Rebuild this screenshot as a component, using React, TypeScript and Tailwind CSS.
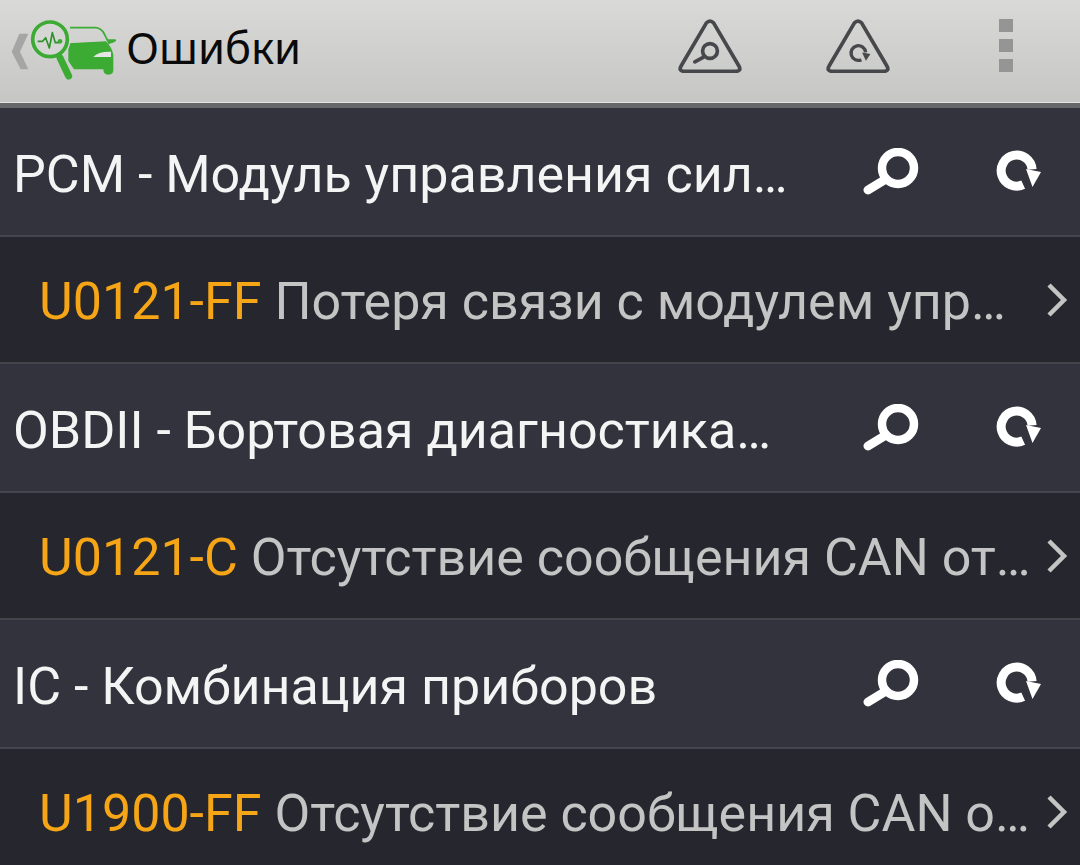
const font = { fontFamily: "Roboto, sans-serif" };

function Logo() {
  return (
    <svg width="120" height="80" viewBox="0 0 360 240" className="shrink-0">
      <path d="M58 83 H85 L60 137 L85 190 H62 L35 137 Z" fill="#a5a5a5" />
      <path d="M205 112 L318 106 Q336 125 340 146 V192 Q340 206 325 206 Q310 206 310 190 H222 L205 165 Z" fill="#3bab33" />
      <path d="M210 65 H285 Q303 65 313 84 L328 114" fill="none" stroke="#3bab33" strokeWidth="5" />
      <path d="M322 100 H344 Q351 100 347 106 Q340 112 328 113 Z" fill="#3bab33" />
      <path d="M280 153 Q294 136 333 137 V153 Z" fill="#e6e6e4" />
      <circle cx="150" cy="100" r="62" fill="#d4d5d3" />
      <circle cx="150" cy="100" r="52" fill="#d6d7d5" stroke="#3bab33" strokeWidth="11" />
      <path d="M180 155 L206 210" stroke="#3bab33" strokeWidth="21" strokeLinecap="round" />
      <path d="M113 106 H128 L137 95 L148 126 L157 80 L166 110 H178" fill="none" stroke="#2e9129" strokeWidth="5" strokeLinejoin="round" />
      <circle cx="180" cy="106" r="7" fill="#3bab33" />
    </svg>
  );
}

function TriBase() {
  return (
    <path
      d="M84 12 Q95 0 106 12 L180 138 Q190 155 172 155 H18 Q0 155 10 138 Z"
      fill="none"
      stroke="#46484c"
      strokeWidth="11"
      strokeLinejoin="round"
    />
  );
}

function TriSearch() {
  return (
    <svg width="64" height="54" viewBox="0 0 190 160" className="shrink-0">
      <TriBase />
      <circle cx="95" cy="95" r="22" fill="none" stroke="#46484c" strokeWidth="11" />
      <path d="M76 113 L50 127" stroke="#46484c" strokeWidth="11" strokeLinecap="round" />
    </svg>
  );
}

function TriRefresh() {
  return (
    <svg width="64" height="54" viewBox="0 0 190 160" className="shrink-0">
      <TriBase />
      <path d="M105 120.6 A21.75 21.75 0 1 1 117.6 99" fill="none" stroke="#46484c" strokeWidth="10" />
      <path d="M107 99 L132 104 L118.5 123.5 Z" fill="#46484c" />
    </svg>
  );
}

function Search() {
  return (
    <svg width="58" height="48" viewBox="0 0 58 48" className="shrink-0">
      <circle cx="36" cy="20" r="16" fill="none" stroke="#fff" strokeWidth="8.5" />
      <path d="M24 31 L6 42" stroke="#fff" strokeWidth="9" strokeLinecap="round" />
    </svg>
  );
}

function Refresh() {
  return (
    <svg width="46" height="44" viewBox="0 0 46 44" className="shrink-0">
      <path d="M27.2 34.7 A15.5 15.5 0 1 1 36.1 19.3" fill="none" stroke="#fff" strokeWidth="9" />
      <path d="M30 19 L45 22 L36.5 37 Z" fill="#fff" />
    </svg>
  );
}

function Chevron() {
  return (
    <svg width="22" height="36" viewBox="0 0 22 36" className="shrink-0">
      <path d="M3 3 L18 18 L3 33" fill="none" stroke="#c4c4c4" strokeWidth="4.5" />
    </svg>
  );
}

function Section({ title }: { title: string }) {
  return (
    <div className="flex h-[129px] items-center border-b-2 border-[#45464c] bg-[#32333c] pl-[13px]">
      <div className="min-w-0 flex-1 whitespace-nowrap pt-[6px] text-[52px] leading-[62px] text-[#f4f4f4]">{title}</div>
      <div className="flex items-center pr-[38px]">
        <Search />
        <div className="w-[76px]" />
        <Refresh />
      </div>
    </div>
  );
}

function Item({ code, text }: { code: string; text: string }) {
  return (
    <div className="flex h-[127px] shrink-0 items-center border-b-2 border-[#45464c] bg-[#25262e] pl-[39px] pr-[12px]">
      <div className="min-w-0 flex-1 whitespace-nowrap pt-[4px] text-[52px] leading-[62px]">
        <span className="text-[#f5a516]">{code}</span>
        <span className="text-[#c4c4c4]"> {text}</span>
      </div>
      <Chevron />
    </div>
  );
}

export default function App() {
  return (
    <div className="h-[865px] w-[1080px] overflow-hidden bg-[#25262e]" style={font}>
      <div className="flex h-[108px] items-center border-b-[5px] border-[#66676a] bg-gradient-to-b from-[#d9dad8] to-[#c6c7c5] pb-[12px] shadow-[inset_0_-1px_0_#e4e4e2]">
        <Logo />
        <div
          className="ml-[6px] flex-1 pt-[2px] text-[43.5px] leading-[60px] text-[#0a0a0a]"
          style={{ fontFamily: "'Noto Sans', sans-serif" }}
        >
          Ошибки
        </div>
        <div className="flex items-center pr-[67px]">
          <TriSearch />
          <div className="w-[84px]" />
          <TriRefresh />
          <div className="w-[109px]" />
          <div className="flex flex-col gap-[7px]">
            <div className="h-[13px] w-[14px] bg-[#959595]" />
            <div className="h-[13px] w-[14px] bg-[#959595]" />
            <div className="h-[13px] w-[14px] bg-[#959595]" />
          </div>
        </div>
      </div>
      <Section title="PCM - Модуль управления сил…" />
      <Item code="U0121-FF" text="Потеря связи с модулем упр…" />
      <Section title="OBDII - Бортовая диагностика…" />
      <Item code="U0121-C" text="Отсутствие сообщения CAN от…" />
      <Section title="IC - Комбинация приборов" />
      <Item code="U1900-FF" text="Отсутствие сообщения CAN о…" />
    </div>
  );
}
